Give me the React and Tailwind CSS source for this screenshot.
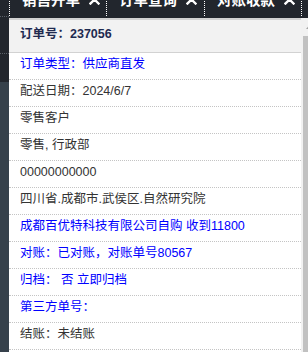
import React from "react";

const tabs = [
  { label: "销售开单", width: "w-[97px]" },
  { label: "订单查询", width: "w-[98px]" },
  { label: "对账收款", width: "w-[97px]" },
];

const rows = [
  { text: "订单类型：供应商直发", blue: true },
  { text: "配送日期：2024/6/7" },
  { text: "零售客户" },
  { text: "零售, 行政部" },
  { text: "00000000000" },
  { text: "四川省.成都市.武侯区.自然研究院" },
  { text: "成都百优特科技有限公司自购 收到11800", blue: true },
  { text: "对账：已对账，对账单号80567", blue: true },
  { text: "归档： 否 立即归档", blue: true },
  { text: "第三方单号：", blue: true },
  { text: "结账：未结账" },
];

const CloseIcon = () => (
  <svg
    width="11"
    height="11"
    viewBox="0 0 11 11"
    className="mt-[3px] ml-[9px] shrink-0"
  >
    <path
      d="M1.5 1.5 L9.5 9.5 M9.5 1.5 L1.5 9.5"
      stroke="#ffffff"
      strokeWidth="2.4"
      strokeLinecap="square"
    />
  </svg>
);

const App = () => {
  return (
    <div className="w-[308px] h-[352px] overflow-hidden flex font-['Liberation_Sans','Noto_Sans_CJK_SC',sans-serif]">
      {/* left sidebar edge */}
      <div className="w-[9px] shrink-0 flex flex-col bg-[#36414b]">
        <div className="h-[17px] bg-[#22262d] border-b border-dotted border-[#5a6068]" />
        <div className="h-[37px] bg-[#22262d] border-b border-dotted border-[#5a6068]" />
        <div className="h-[28px] bg-[#22262d]" />
      </div>

      <div className="flex-1 flex flex-col min-w-0">
        {/* tab bar */}
        <div className="h-[18px] shrink-0 bg-[#22262d] overflow-hidden flex">
          {tabs.map((tab) => (
            <div
              key={tab.label}
              className={`${tab.width} shrink-0 h-[25px] -mt-[9px] flex items-start pl-[12px] border-l border-dotted border-white`}
            >
              <span className="text-[14.5px] leading-[18px] font-bold text-white whitespace-nowrap">
                {tab.label}
              </span>
              <CloseIcon />
            </div>
          ))}
          <div className="w-[20px] shrink-0 h-[25px] -mt-[9px] border-l border-dotted border-white" />
        </div>

        <div className="flex flex-1 min-h-0">
          {/* panel */}
          <div className="w-[292px] shrink-0 bg-white">
            <div className="h-[35px] border-t-2 border-b border-[#d2d2d2] bg-[#f2f2f2] px-[11px] text-[12.5px] leading-[28px] font-bold text-[#1f2a50] whitespace-nowrap">
              订单号：237056
            </div>
            {rows.map((row) => (
              <div
                key={row.text}
                className={`h-[27px] border-b border-dotted border-[#c4c4c4] px-[11px] text-[12.5px] leading-[22px] whitespace-nowrap ${
                  row.blue ? "text-[#0000ff]" : "text-[#333333]"
                }`}
              >
                {row.text}
              </div>
            ))}
          </div>

          {/* scrollbar */}
          <div className="w-[17px] shrink-0 bg-[#f1f1f1] flex flex-col">
            <div className="h-[18px] shrink-0 flex items-center justify-center">
              <svg width="7" height="4" viewBox="0 0 7 4">
                <path d="M0 4 L3.5 0 L7 4 Z" fill="#a3a3a3" />
              </svg>
            </div>
            <div className="flex-1 mx-[2px] bg-[#c1c1c1]" />
          </div>
        </div>
      </div>
    </div>
  );
};

export default App;
